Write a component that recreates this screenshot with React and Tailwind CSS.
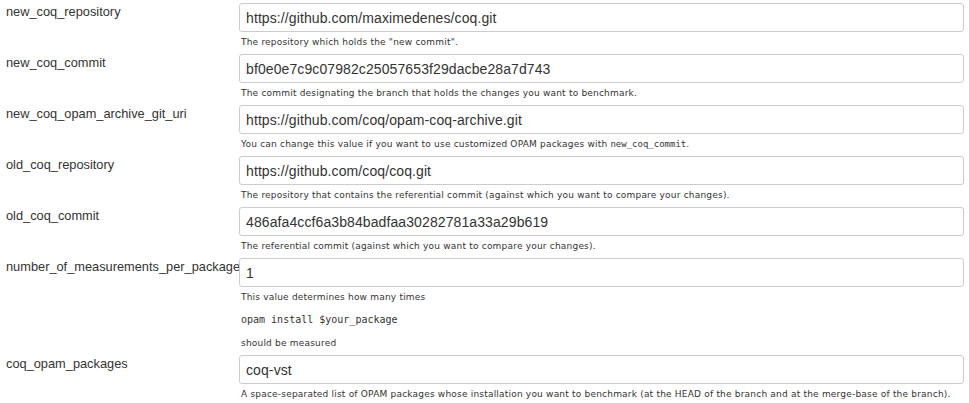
const params = [
  {
    name: 'new_coq_repository',
    value: 'https://github.com/maximedenes/coq.git',
    help: ['The repository which holds the "new commit".'],
  },
  {
    name: 'new_coq_commit',
    value: 'bf0e0e7c9c07982c25057653f29dacbe28a7d743',
    help: ['The commit designating the branch that holds the changes you want to benchmark.'],
  },
  {
    name: 'new_coq_opam_archive_git_uri',
    value: 'https://github.com/coq/opam-coq-archive.git',
    help: [
      <>
        You can change this value if you want to use customized OPAM packages with{' '}
        <code className="font-['DejaVu_Sans_Mono',monospace] tracking-normal">new_coq_commit</code>.
      </>,
    ],
  },
  {
    name: 'old_coq_repository',
    value: 'https://github.com/coq/coq.git',
    help: ['The repository that contains the referential commit (against which you want to compare your changes).'],
  },
  {
    name: 'old_coq_commit',
    value: '486afa4ccf6a3b84badfaa30282781a33a29b619',
    help: ['The referential commit (against which you want to compare your changes).'],
  },
  {
    name: 'number_of_measurements_per_package',
    value: '1',
    help: [
      'This value determines how many times',
      <code className="font-['DejaVu_Sans_Mono',monospace] text-[10px] tracking-normal">opam install $your_package</code>,
      'should be measured',
    ],
  },
  {
    name: 'coq_opam_packages',
    value: 'coq-vst',
    help: [
      'A space-separated list of OPAM packages whose installation you want to benchmark (at the HEAD of the branch and at the merge-base of the branch).',
    ],
  },
];

function ParamRow({ param }) {
  return (
    <div className="flex pt-[3px]">
      <div className="w-[239px] shrink-0 pl-[6px] text-[12.8px] leading-[17px] text-[#333] whitespace-nowrap">
        {param.name}
      </div>
      <div className="w-[725px]">
        <input
          type="text"
          defaultValue={param.value}
          className="block w-full h-[29px] px-[6px] rounded-[3px] border border-[#ccc] bg-white text-[14px] tracking-[0.1px] text-[#333] font-['Liberation_Sans',Arial,sans-serif] outline-none"
        />
        <div className="pt-[3px] pb-[2px] pl-[2px] text-[9px] leading-[14px] tracking-[0.2px] text-[#333] font-['DejaVu_Sans',Verdana,sans-serif] flex flex-col gap-[9px] whitespace-nowrap">
          {param.help.map((h, i) => (
            <div key={i}>{h}</div>
          ))}
        </div>
      </div>
    </div>
  );
}

export default function App() {
  return (
    <div className="w-[969px] h-[403px] bg-white overflow-hidden font-['Liberation_Sans',Arial,sans-serif]">
      {params.map(p => (
        <ParamRow key={p.name} param={p} />
      ))}
    </div>
  );
}
